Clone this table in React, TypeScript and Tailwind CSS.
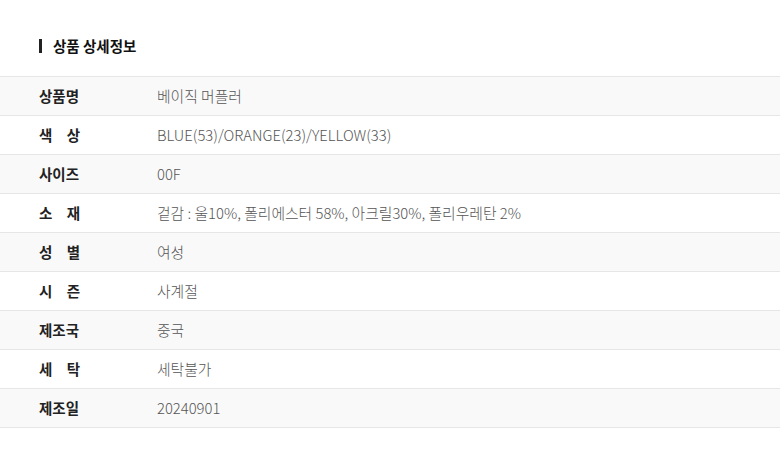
import React from "react";

const rows: { label: string[]; value: string }[] = [
  { label: ["상품명"], value: "베이직 머플러" },
  { label: ["색", "상"], value: "BLUE(53)/ORANGE(23)/YELLOW(33)" },
  { label: ["사이즈"], value: "00F" },
  { label: ["소", "재"], value: "겉감 : 울10%, 폴리에스터 58%, 아크릴30%, 폴리우레탄 2%" },
  { label: ["성", "별"], value: "여성" },
  { label: ["시", "즌"], value: "사계절" },
  { label: ["제조국"], value: "중국" },
  { label: ["세", "탁"], value: "세탁불가" },
  { label: ["제조일"], value: "20240901" },
];

export default function App() {
  return (
    <div
      className="w-[780px] h-[466px] bg-white"
      style={{ fontFamily: '"Noto Sans CJK KR", "Noto Sans", sans-serif' }}
    >
      <div className="pt-[37px] pl-[39px] h-[76px] flex items-start">
        <div className="flex items-center gap-[11px] h-[18px]">
          <div className="w-[3px] h-[14px] bg-[#222]" />
          <span className="text-[14.5px] font-bold text-[#111] leading-none">상품 상세정보</span>
        </div>
      </div>
      <div className="border-t border-[#e6e6e6]">
        {rows.map((r, i) => (
          <div
            key={i}
            className={`flex items-center h-[39px] border-b border-[#e6e6e6] ${
              i % 2 === 0 ? "bg-[#f9f9f9]" : "bg-white"
            }`}
          >
            <div className="w-[157px] pl-[39px] shrink-0 text-[14.5px] font-bold text-[#222] leading-[20px]">
              {r.label.length === 1 ? (
                <span className="block">{r.label[0]}</span>
              ) : (
                <span className="flex justify-between w-[41px]">
                  <span>{r.label[0]}</span>
                  <span>{r.label[1]}</span>
                </span>
              )}
            </div>
            <div className="text-[14.8px] text-[#555] font-light leading-[20px]">{r.value}</div>
          </div>
        ))}
      </div>
    </div>
  );
}
